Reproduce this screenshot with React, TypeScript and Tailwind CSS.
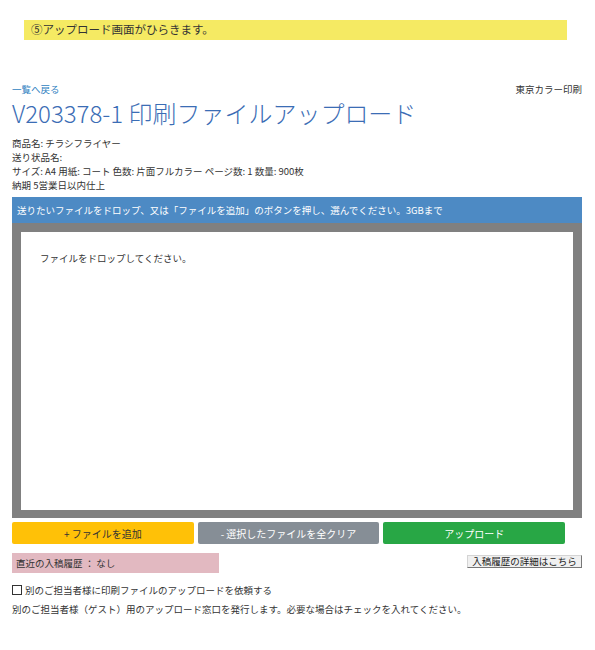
const jp = "font-['Meiryo','Noto_Sans_CJK_JP',sans-serif]";

const infoLines = [
  "商品名: チラシフライヤー",
  "送り状品名:",
  "サイズ: A4 用紙: コート 色数: 片面フルカラー ページ数: 1 数量: 900枚",
  "納期 5営業日以内仕上",
];

export default function App() {
  return (
    <div className={`${jp} w-[595px] h-[650px] bg-white text-[#333] pt-[20px]`}>
      {/* step caption */}
      <div className="ml-[24px] mr-[28px] h-[20px] bg-[#f5ea63] pl-[7px] flex items-center text-[11.5px] text-[#333]">
        ⑤アップロード画面がひらきます。
      </div>

      <div className="pl-[12px] pr-[13px]">
        {/* header */}
        <div className="mt-[42px] h-[14px] flex items-center justify-between text-[9.5px] leading-[14px]">
          <a href="#" className="text-[#2f7fc1]">一覧へ戻る</a>
          <span className="text-[#333]">東京カラー印刷</span>
        </div>
        <h1 className="mt-[2px] h-[30px] text-[24px] leading-[30px] text-[#3b6db5] font-light whitespace-nowrap">
          V203378-1 印刷ファイルアップロード
        </h1>

        {/* product info */}
        <div className="mt-[8px] text-[9.5px] leading-[14px]">
          {infoLines.map((line) => (
            <div key={line} className="h-[14px] whitespace-nowrap">{line}</div>
          ))}
        </div>

        {/* drop area */}
        <div className="mt-[5px] h-[26px] bg-[#4d8ac4] text-white text-[9.5px] pl-[5px] flex items-center whitespace-nowrap">
          送りたいファイルをドロップ、又は「ファイルを追加」のボタンを押し、選んでください。3GBまで
        </div>
        <div className="bg-[#808080] pt-[9px] pb-[8px] px-[9px]">
          <div className="h-[278px] bg-white pl-[19px] pt-[19px] text-[9.5px] leading-[14px]">
            ファイルをドロップしてください。
          </div>
        </div>

        {/* actions */}
        <div className="mt-[4px] w-[553px] grid grid-cols-3 gap-[4px] text-[10px]">
          <button className="h-[22px] rounded-[2px] bg-[#ffc107] text-[#333]">+ ファイルを追加</button>
          <button className="h-[22px] rounded-[2px] bg-[#868e96] text-white">- 選択したファイルを全クリア</button>
          <button className="h-[22px] rounded-[2px] bg-[#28a745] text-white">アップロード</button>
        </div>

        <div className="mt-[9px] flex items-start justify-between">
          <div className="w-[207px] h-[20px] bg-[#e2b9c1] pl-[4px] flex items-center text-[9.5px] text-[#333]">
            直近の入稿履歴 ： なし
          </div>
          <button className="mt-[2px] w-[115px] h-[13px] bg-[#f0f0f0] border border-[#d4d4d4] border-b-[#777] border-r-[#777] text-[9.5px] leading-[11px] text-[#222] flex items-center justify-center">
            入稿履歴の詳細はこちら
          </button>
        </div>

        {/* guest upload */}
        <label className="mt-[10px] h-[14px] flex items-center gap-[3px] text-[9.5px] leading-[14px]">
          <span className="w-[10px] h-[10px] border border-[#333] bg-white shrink-0" />
          別のご担当者様に印刷ファイルのアップロードを依頼する
        </label>
        <p className="mt-[5px] h-[14px] text-[9.5px] leading-[14px] whitespace-nowrap">
          別のご担当者様（ゲスト）用のアップロード窓口を発行します。必要な場合はチェックを入れてください。
        </p>
      </div>
    </div>
  );
}
